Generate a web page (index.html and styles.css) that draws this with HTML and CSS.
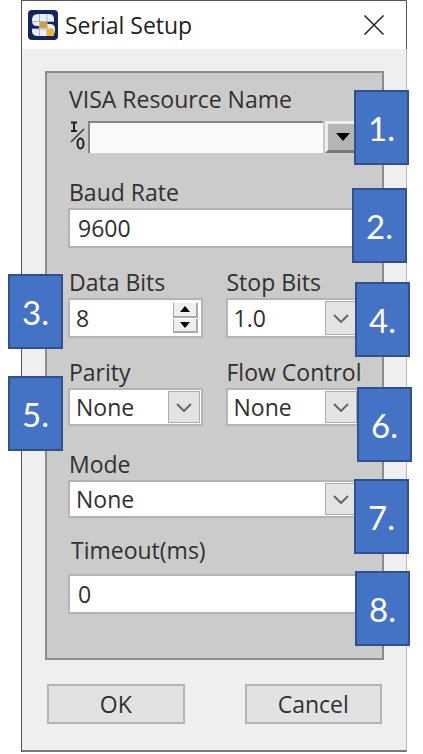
FILE: index.html
```html
<!DOCTYPE html>
<html lang="en">
<head>
<meta charset="utf-8">
<meta name="viewport" content="width=device-width, initial-scale=1">
<title>Serial Setup</title>
<link rel="stylesheet" href="styles.css">
</head>
<body>
<main class="dialog">
  <header class="titlebar">
    <svg class="app-icon" viewBox="0 0 30 30" aria-hidden="true">
      <rect width="30" height="30" rx="4" fill="#14265c"/>
      <path d="M10 4h11q5 0 5 5v2h-7v3h3q5 0 5 5v1q0 6-6 6H10q-6 0-6-5v-2h7v-3H9q-5 0-5-5V10q0-6 6-6z" fill="#e9eef8"/>
      <path d="M11.500 4v22M19 4v22M4 11.500h22M4 19h22" stroke="#a9b4d0" stroke-width="1"/>
      <rect x="12" y="12" width="7" height="6" fill="#d9a12c"/>
      <rect x="19" y="19" width="7" height="7" fill="#f3b71b"/>
    </svg>
    <h1 class="title">Serial Setup</h1>
    <button class="close" type="button" aria-label="Close">
      <svg viewBox="0 0 20 20" width="20" height="20" aria-hidden="true"><path d="M.5.5l19 19M19.500.5l-19 19" stroke="#222" stroke-width="1.500"/></svg>
    </button>
  </header>
  <form class="body">
    <div class="panel">
      <div class="field field-visa">
        <label for="visa">VISA Resource Name</label>
        <div class="visa-row">
          <svg class="io" viewBox="0 0 16 30" aria-hidden="true">
            <path d="M1 1.500h6M1 10h6M4 1v9" stroke="#222" stroke-width="2" fill="none"/>
            <path d="M1 21L14 8" stroke="#333" stroke-width="1.500"/>
            <ellipse cx="10.500" cy="22.500" rx="3" ry="5" stroke="#222" stroke-width="2" fill="none"/>
          </svg>
          <input id="visa" class="sunken" type="text">
          <button class="drop" type="button" aria-label="Show resources">
            <svg viewBox="0 0 14 8" width="14" height="8" aria-hidden="true"><path d="M0 0h14L7 8z" fill="#000"/></svg>
          </button>
        </div>
        <span class="badge b1">1.</span>
      </div>
      <div class="field">
        <label for="baud">Baud Rate</label>
        <input id="baud" class="box indent" type="text" value="9600">
        <span class="badge b2">2.</span>
      </div>
      <div class="pair">
        <div class="field">
          <label for="data">Data Bits</label>
          <div class="control">
            <input id="data" class="box" type="text" inputmode="numeric" value="8">
            <div class="spinner">
              <button type="button" aria-label="Increase"><svg viewBox="0 0 10 6" width="10" height="6" aria-hidden="true"><path d="M5 0l5 6H0z"/></svg></button>
              <button type="button" aria-label="Decrease"><svg viewBox="0 0 10 6" width="10" height="6" aria-hidden="true"><path d="M0 0h10L5 6z"/></svg></button>
            </div>
          </div>
          <span class="badge b3">3.</span>
        </div>
        <div class="field">
          <label for="stop">Stop Bits</label>
          <div class="control">
            <select id="stop" class="box"><option>1.0</option></select>
            <span class="arrow"><svg viewBox="0 0 16 9" width="16" height="9" aria-hidden="true"><path d="M1 1l7 7 7-7"/></svg></span>
          </div>
          <span class="badge b4">4.</span>
        </div>
      </div>
      <div class="pair">
        <div class="field">
          <label for="parity">Parity</label>
          <div class="control">
            <select id="parity" class="box short"><option>None</option></select>
            <span class="arrow"><svg viewBox="0 0 16 9" width="16" height="9" aria-hidden="true"><path d="M1 1l7 7 7-7"/></svg></span>
          </div>
          <span class="badge b5">5.</span>
        </div>
        <div class="field">
          <label for="flow">Flow Control</label>
          <div class="control">
            <select id="flow" class="box short"><option>None</option></select>
            <span class="arrow"><svg viewBox="0 0 16 9" width="16" height="9" aria-hidden="true"><path d="M1 1l7 7 7-7"/></svg></span>
          </div>
          <span class="badge b6">6.</span>
        </div>
      </div>
      <div class="field field-mode">
        <label for="mode">Mode</label>
        <div class="control">
          <select id="mode" class="box short"><option>None</option></select>
          <span class="arrow"><svg viewBox="0 0 16 9" width="16" height="9" aria-hidden="true"><path d="M1 1l7 7 7-7"/></svg></span>
        </div>
        <span class="badge b7">7.</span>
      </div>
      <div class="field field-timeout">
        <label for="timeout">Timeout(ms)</label>
        <input id="timeout" class="box indent" type="text" value="0">
        <span class="badge b8">8.</span>
      </div>
    </div>
    <div class="actions">
      <button class="action" type="button">OK</button>
      <button class="action" type="button">Cancel</button>
    </div>
  </form>
</main>
</body>
</html>
```
FILE: styles.css
```css
* {
  box-sizing: border-box;
}

body {
  margin: 0;
  background: #fff;
  color: #303030;
  font-family: "Open Sans", "Noto Sans", sans-serif;
  font-size: 23px;
  line-height: 28px;
}

button,
input,
select {
  margin: 0;
  color: inherit;
  font: inherit;
}

button {
  padding: 0;
}

.dialog {
  margin: 0 16px 0 21px;
  border: 1px solid #555;
  border-right-color: #b8b8b8;
  border-bottom: 2px solid #777;
  background: #efefef;
  box-shadow: 0 3px 0 #b4b4b4;
}

.titlebar {
  display: flex;
  align-items: center;
  height: 48px;
  margin-right: -1px;
  padding: 0 22px 0 6px;
  border-right: 1px solid #555;
  background: #fff;
}

.app-icon {
  width: 30px;
  height: 30px;
}

.title {
  flex: 1;
  margin: 0 0 0 7px;
  color: #222;
  font-size: 23px;
  font-weight: 400;
}

.close {
  display: flex;
  border: 0;
  background: none;
}

.body {
  padding: 22px 22px 26px 23px;
}

.panel {
  display: flex;
  flex-direction: column;
  gap: 20px;
  padding: 12px 22px 44px 21px;
  border: 2px solid #8c8c8c;
  background: #cbcbcb;
}

.field {
  position: relative;
  display: flex;
  flex-direction: column;
  gap: 2px;
  min-width: 0;
}

.field label {
  padding-left: 1px;
  white-space: nowrap;
}

.pair {
  display: grid;
  grid-template-columns: 1fr 1fr;
  gap: 23px;
}

.field-visa {
  gap: 8px;
  margin-bottom: 5px;
}

.field-mode {
  margin-top: 4px;
}

.field-timeout {
  gap: 10px;
  margin-top: -2px;
}

.field-timeout label {
  padding-left: 3px;
}

.control {
  position: relative;
}

.box {
  display: block;
  width: 100%;
  height: 40px;
  padding: 0 6px;
  border: 2px solid #b4b4b4;
  border-radius: 0;
  background: #fff;
  appearance: none;
}

.box.indent {
  padding-left: 8px;
}

.box.short {
  height: 38px;
}

.arrow {
  position: absolute;
  top: 3px;
  right: 3px;
  bottom: 3px;
  display: flex;
  align-items: center;
  justify-content: center;
  width: 32px;
  border: 1px solid #adadad;
  background: #e3e3e3;
  pointer-events: none;
}

.arrow path {
  fill: none;
  stroke: #666;
  stroke-width: 2;
}

.spinner {
  position: absolute;
  top: 5px;
  right: 5px;
  bottom: 5px;
  display: grid;
  grid-template-rows: 1fr 1fr;
  gap: 1px;
  width: 25px;
}

.spinner button {
  display: flex;
  align-items: center;
  justify-content: center;
  border: solid #aaa;
  border-width: 0 2px 2px 1px;
  background: #eee;
}

.visa-row {
  display: flex;
  height: 32px;
}

.io {
  flex: none;
  width: 16px;
  height: 30px;
  margin: 0 2px;
}

.sunken {
  flex: 1;
  min-width: 0;
  padding: 0 6px;
  border: 0 solid #858585;
  border-width: 2px 0 0 2px;
  border-radius: 0;
  background: #fafafa;
}

.drop {
  display: flex;
  align-items: center;
  justify-content: center;
  width: 35px;
  margin-left: 2px;
  border: 3px solid #777;
  border-top-color: #eee;
  border-left-color: #eee;
  background: #b5b5b5;
}

.badge {
  position: absolute;
  display: flex;
  align-items: center;
  justify-content: center;
  width: 55px;
  height: 75px;
  border: 2px solid #2f528f;
  background: #4472c4;
  color: #fff;
  font-family: Lato, "Open Sans", sans-serif;
  font-size: 33px;
}

.b1 { top: 5px; right: -49px; }
.b2 { top: 10px; right: -47px; }
.b3 { top: 6px; left: -60px; }
.b4 { top: 14px; right: -50px; }
.b5 { top: 18px; left: -60px; }
.b6 { top: 29px; right: -52px; }
.b7 { top: 29px; right: -49px; }
.b8 { top: 35px; right: -50px; }

.actions {
  display: flex;
  justify-content: space-between;
  gap: 60px;
  margin-top: 24px;
  padding: 0 2px;
}

.action {
  flex: 1;
  height: 40px;
  border: 2px solid #b4b4b4;
  background: #e2e2e2;
}
```
